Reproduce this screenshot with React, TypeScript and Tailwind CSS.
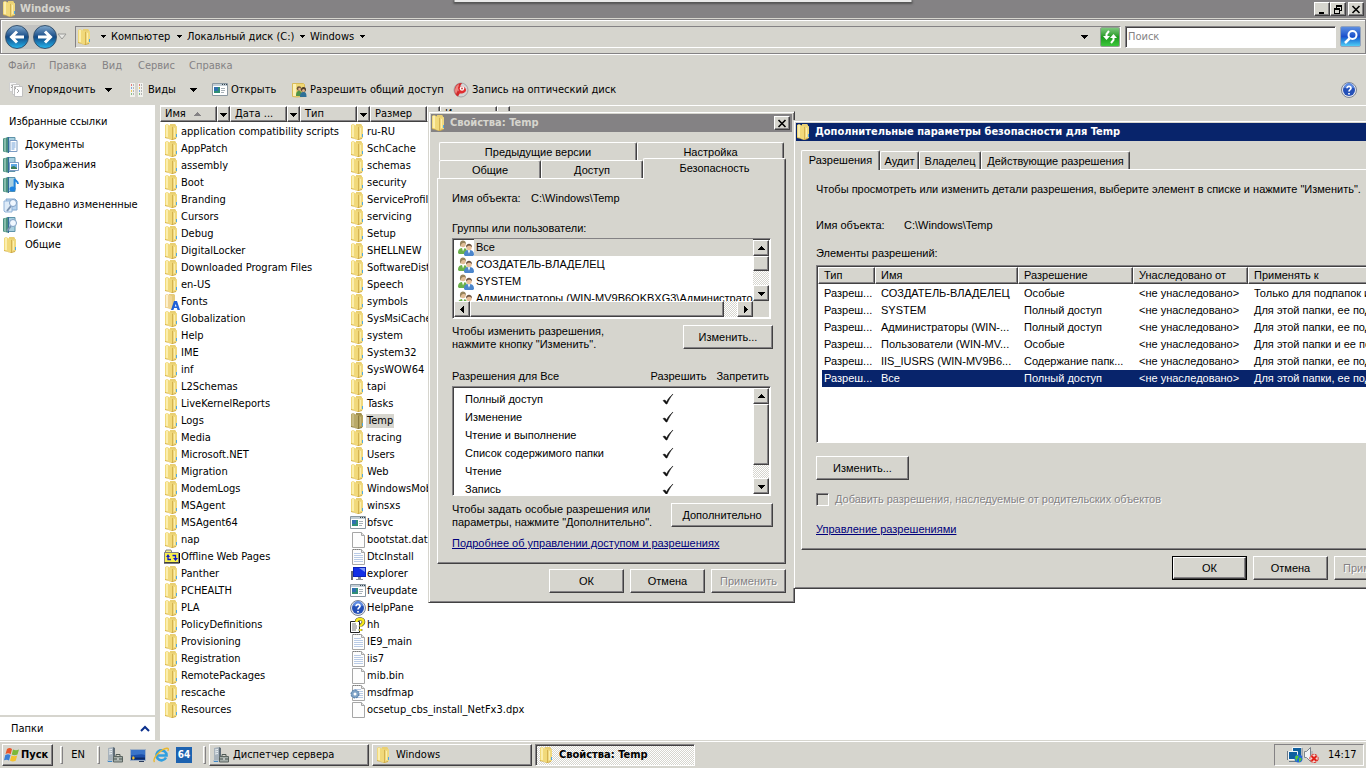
import React, { useState } from "react";

const FONT_UI = "font-['DejaVu_Sans_Condensed','DejaVu_Sans',sans-serif]";
const FONT_DIALOG = "font-['Liberation_Sans',Arial,sans-serif]";

// classic 3D edges
const RAISED =
  "border border-t-white border-l-white border-r-[#424142] border-b-[#424142] bg-[#d6d5ce] shadow-[inset_-1px_-1px_0_#848284]";
const SUNKEN =
  "border border-t-[#848284] border-l-[#848284] border-r-white border-b-white shadow-[inset_1px_1px_0_#424142]";
const TRACK =
  "bg-[repeating-conic-gradient(#ffffff_0_25%,#d6d5ce_0_50%)] bg-[length:2px_2px]";

type IconProps = { className?: string };

function FolderIcon({ className = "h-4 w-4", dark = false }: IconProps & { dark?: boolean }) {
  return (
    <svg viewBox="0 0 16 16" className={`shrink-0 ${className}`} aria-hidden="true">
      <path d="M6 0h5l1 1v13H6z" fill={dark ? "#a08f4e" : "#e9cf72"} />
      <path d="M8 3l5-1v12l-5 2z" fill={dark ? "#b3a25d" : "#f0d97f"} />
      <path d="M8 3h1v13H8z" fill={dark ? "#8b7b3f" : "#d4b250"} />
      <path d="M1 1l2-1 4 2h1v14l-5-2H1z" fill={dark ? "#b9a968" : "#f1d97a"} />
      <path d="M2 1h2v12H2z" fill={dark ? "#c9bc84" : "#fbeeae"} />
      <path d="M1 13l2 1 4 1.500 5-1.500v1l-4 1-5-1.500-2-.5z" fill={dark ? "#85763a" : "#cfaa45"} />
      <path d="M10 4h1v9h-1z" fill={dark ? "#c5b675" : "#fbeeae"} />
      <path d="M12 10h1v3h-1z" fill="#4fa8e4" />
    </svg>
  );
}

function FontsIcon() {
  return (
    <svg viewBox="0 0 16 16" className="h-4 w-4 shrink-0" aria-hidden="true">
      <path d="M5 0h5l1 1v13H5z" fill="#e6cb7c" />
      <path d="M1 1l2-1 5 2v14l-5-2H1z" fill="#f0d596" />
      <path d="M2 1h2v12H2z" fill="#fdf0cb" />
      <path d="M7 16l3-9h3l3 9h-2.500l-.6-2h-2.800l-.7 2zM10.700 12.500h1.800L11.800 10z" fill="#1f5fd8" />
    </svg>
  );
}

function OfflineIcon() {
  return (
    <svg viewBox="0 0 16 16" className="h-4 w-4 shrink-0" aria-hidden="true">
      <path d="M1 4l1-3h5l1 3z" fill="#f4ee8c" stroke="#848284" />
      <path d="M.5 3.500h14v10H.5z" fill="#f8f04c" stroke="#848284" />
      <path d="M0 14h15.500V4" fill="none" stroke="#000" />
      <path d="M2 8l2-3 2 3zM9 9h5l-2.500 3z" fill="#1018c8" />
      <path d="M4 7v3.500h3M11.500 10V6.500h-3" fill="none" stroke="#1018c8" strokeWidth="1.300" />
    </svg>
  );
}

function AppFileIcon({ className = "h-4 w-4" }: IconProps) {
  return (
    <svg viewBox="0 0 16 16" className={`shrink-0 ${className}`} aria-hidden="true">
      <path d="M.5 1.500h15v12H.5z" fill="#fff" stroke="#8a97a0" />
      <path d="M1 2h14v2H1z" fill="#c3ced6" />
      <path d="M10 2h1v1h-1zM12 2h1v1h-1zM14 2h1v1h-1z" fill="#33434d" />
      <path d="M2 5h6v6H2z" fill="#2f8f76" />
      <path d="M2 5h4v4H2z" fill="#2f6fae" />
      <path d="M9 6h4v1H9zM9 8h4v1H9zM9 10h3v1H9z" fill="#a9b2b8" />
    </svg>
  );
}

function FileIcon({ lines = false, gear = false }: { lines?: boolean; gear?: boolean }) {
  return (
    <svg viewBox="0 0 16 16" className="h-4 w-4 shrink-0" aria-hidden="true">
      <path d="M2.500.5h9l3 3v12h-12z" fill="#fdfdfd" stroke="#a6a6a6" />
      <path d="M11.500.5v3h3" fill="#e4e4e4" stroke="#a6a6a6" />
      {lines && <path d="M4 4.500h7M4 6.500h9M4 8.500h9M4 10.500h9M4 12.500h9" stroke="#b9cbe6" />}
      {lines && <path d="M3 .5h8" stroke="#7d7d7d" strokeDasharray="1 1" />}
      {gear && (
        <>
          <circle cx="5" cy="9" r="4" fill="#7fa3c6" stroke="#4d77a3" strokeDasharray="2 1" />
          <circle cx="5" cy="9" r="1.500" fill="#fff" />
        </>
      )}
    </svg>
  );
}

function ExplorerIcon() {
  return (
    <svg viewBox="0 0 16 16" className="h-4 w-4 shrink-0" aria-hidden="true">
      <path d="M3 1h13v10H3z" fill="#0b22b8" />
      <path d="M4 2h11v8H4z" fill="#1330e6" />
      <path d="M9 2h6v4z" fill="#7d98f8" />
      <path d="M1 5h2v9H1z" fill="#6b6e74" />
      <path d="M8 11h3v2h2v1H6v-1h2z" fill="#8d9096" />
    </svg>
  );
}

function HelpIcon({ className = "h-4 w-4" }: IconProps) {
  return (
    <svg viewBox="0 0 16 16" className={`shrink-0 ${className}`} aria-hidden="true">
      <circle cx="8" cy="8" r="7.500" fill="#e6e8ee" stroke="#7b8496" />
      <circle cx="8" cy="8" r="6" fill="#2450b8" />
      <path d="M3 6a5 5 0 0 1 10 0c-3-1-7-1-10 0z" fill="#5f8be0" />
      <path d="M6 6.300C6 3.600 10.200 3.800 10 6.300 9.900 7.700 8 7.700 8 9.500M8 11v1.500" fill="none" stroke="#fff" strokeWidth="1.700" />
    </svg>
  );
}

function HhIcon() {
  return (
    <svg viewBox="0 0 16 16" className="h-4 w-4 shrink-0" aria-hidden="true">
      <path d="M.5 4.500h9v11h-9z" fill="#fff" stroke="#222" />
      <path d="M2 7h4M2 9h5M2 11h5M2 13h4" stroke="#777" />
      <path d="M6.500 5c0-4 7-4 7 0 0 2.500-3 2.500-3 4.500M10.500 12v2" fill="none" stroke="#444" strokeWidth="3.600" />
      <path d="M6.500 5c0-4 7-4 7 0 0 2.500-3 2.500-3 4.500M10.500 12v2" fill="none" stroke="#f8ea1c" strokeWidth="2.400" />
    </svg>
  );
}

// sidebar link: teal book with an overlay
function LinkIcon({ kind }: { kind: string }) {
  return (
    <svg viewBox="0 0 16 16" className="h-4 w-4 shrink-0" aria-hidden="true">
      {kind === "recent" ? (
        <>
          <path d="M3 2h9l2 2v9H5z" fill="#b8d3ee" stroke="#7ea6d0" />
          <path d="M1 4h8v11H2L1 14z" fill="#deebf8" stroke="#8fb2d8" />
        </>
      ) : (
        <>
          <path d="M4 .5h8v14H4z" fill="#a8cfe0" stroke="#5d93a8" />
          <path d="M0 1.500L6 0v16l-6-1.500z" fill="#4a8f80" />
          <path d="M1 2l2-1v14l-2-1z" fill="#86bcab" />
          <path d="M5 0h1v16H5z" fill="#35699a" />
        </>
      )}
      {kind === "docs" && (
        <>
          <path d="M7 3.500h7v11H7z" fill="#fff" stroke="#7b9cc4" />
          <path d="M8.500 6h4M8.500 8h4M8.500 10h4M8.500 12h3" stroke="#6f9fd8" />
        </>
      )}
      {kind === "pics" && (
        <>
          <path d="M6.500 5.500h9v8h-9z" fill="#fff" stroke="#7b9cc4" />
          <path d="M8 7h6v5H8z" fill="#5fa8e4" />
          <path d="M8 10l3-1 3 2v1H8z" fill="#3c7e58" />
        </>
      )}
      {kind === "music" && (
        <>
          <ellipse cx="9.500" cy="12" rx="3" ry="2.500" fill="#1d83e0" />
          <path d="M11.500 12V2c1 2 3.500 2 3.500 5" fill="none" stroke="#1d83e0" strokeWidth="1.800" />
        </>
      )}
      {(kind === "search" || kind === "recent") && (
        <>
          <path d="M8 9l-4 5" stroke="#7b92b0" strokeWidth="2" />
          <circle cx="10" cy="6" r="3.500" fill="#f0f7ff" stroke="#7f9fc4" />
        </>
      )}
    </svg>
  );
}

function UsersIcon({ className = "h-4 w-4" }: IconProps) {
  return (
    <svg viewBox="0 0 16 16" className={`shrink-0 ${className}`} aria-hidden="true">
      <path d="M0 13c0-4 2-5 5-5s4 1 4 5l-2 1H1z" fill="#6bb04a" />
      <path d="M4 8l1 3.500L6.500 8z" fill="#fff" />
      <circle cx="5" cy="4.500" r="2.700" fill="#e0bd96" />
      <path d="M2 5C1-.8 8.500-.8 8 4.500 7 2.500 4 2.500 3 5v2z" fill="#97845c" />
      <path d="M6 15c0-4 2-5 5-5s5 1 5 5l-1 1H7z" fill="#4b86cc" />
      <circle cx="11" cy="7.500" r="2.700" fill="#e8c09a" />
      <path d="M8 7.500c-.5-5 6.500-5 6 0-1-2-4-2.500-6 0z" fill="#6d5440" />
      <path d="M9.700 10.200l1.300 3.500 1.300-3.500z" fill="#fff" />
    </svg>
  );
}

function OrganizeIcon() {
  return (
    <svg viewBox="0 0 16 16" className="h-4 w-4 shrink-0" aria-hidden="true">
      <path d="M.5.5h7v9h-7z" fill="#f6f6f6" stroke="#d0d0d0" />
      <path d="M3.500 2.500h7v10h-7z" fill="#fbfbfb" stroke="#c6c6c6" />
      <path d="M5.500 4.500h8v10h-8z" fill="#fff" stroke="#c0c0c0" />
      <path d="M2 3l2 1-2 2M5 5l2 1-2 2M8 7l2 2-2 2" fill="none" stroke="#a8a8a8" />
    </svg>
  );
}

function ViewsIcon() {
  return (
    <svg viewBox="0 0 16 16" className="h-4 w-4 shrink-0" aria-hidden="true">
      <path d="M0 1h5v14H0zM8 1h5v14H8z" fill="#f2f2ee" />
      <path d="M1 2h1v2H1zM9 2h1v2H9z" fill="#e07a7a" />
      <path d="M1 5h1v2H1zM9 8h1v2H9z" fill="#7fa5de" />
      <path d="M1 8h1v2H1zM9 5h1v2H9z" fill="#ecc85c" />
      <path d="M1 11h1v2H1zM9 11h1v2H9z" fill="#84c084" />
      <path d="M3.500 2v12M11.500 2v12" stroke="#b4b4b4" strokeDasharray="2 1" />
    </svg>
  );
}

function ShareIcon() {
  return (
    <svg viewBox="0 0 16 16" className="h-4 w-4 shrink-0" aria-hidden="true">
      <path d="M.5 1.500h11l1 1v12l-8 .5-4-.5z" fill="#f0d774" stroke="#d8bb58" />
      <path d="M1 2h3v12H1z" fill="#fbf0b4" />
      <path d="M4 14c0-4 1-5 3-5s3 1 3 5z" fill="#4f9448" />
      <circle cx="7" cy="6.500" r="2.300" fill="#6b543c" />
      <circle cx="7.500" cy="7" r="1.300" fill="#dfb08a" />
      <path d="M8 15c0-4 1.500-5 3.500-5s3 1 3 5z" fill="#2f7098" />
      <circle cx="11.500" cy="7.500" r="2.500" fill="#4a3a2b" />
      <circle cx="11.500" cy="8.500" r="1.500" fill="#dfb08a" />
    </svg>
  );
}

function BurnIcon() {
  return (
    <svg viewBox="0 0 16 16" className="h-4 w-4 shrink-0" aria-hidden="true">
      <circle cx="8" cy="8" r="7" fill="#d4d4d4" stroke="#a4a4a4" />
      <path d="M9 1C1 0-1 12 5 14.500L7 11 5 8z" fill="#cf2a2c" />
      <path d="M6 2C2 4 1 9 3 12l2-4z" fill="#ee8680" />
      <path d="M5 5c3-2 8 0 8 3 0 3-5 4.500-7 3z" fill="#e02d2f" />
      <circle cx="9" cy="6.500" r="2.200" fill="#fff" />
      <circle cx="9" cy="6.500" r=".9" fill="#b8443c" />
    </svg>
  );
}

function ServerIcon() {
  return (
    <svg viewBox="0 0 16 16" className="h-4 w-4 shrink-0" aria-hidden="true">
      <path d="M1 1l5-1v14l-5 1z" fill="#a7b2bb" />
      <path d="M6 0l2 1v13H6z" fill="#5e6b76" />
      <path d="M2 3l3-.5M2 5l3-.5M2 7l3-.5" stroke="#eef2f5" />
      <path d="M0 13h6v2H0z" fill="#b4c2cc" />
      <path d="M1 14h4v1H1z" fill="#3f88c8" />
      <path d="M6.500 9.500h9v5.500h-9z" fill="#a3aca8" stroke="#5c6662" />
      <path d="M9 9V7.500h4V9M6 12h10" fill="none" stroke="#4f5a56" />
      <path d="M10.500 11h1v2h-1z" fill="#fff" />
    </svg>
  );
}

function DesktopIcon() {
  return (
    <svg viewBox="0 0 16 16" className="h-4 w-4 shrink-0" aria-hidden="true">
      <path d="M.5 2.500h15v11H.5z" fill="#1c4fa8" stroke="#9fb0c6" />
      <path d="M1 3h14v5C10 6 5 9 1 8z" fill="#3a74c8" />
      <path d="M1 11.500h14" stroke="#0c2b66" strokeWidth="2" />
      <path d="M3 9l2 2-2 2-1-2z" fill="#f0c030" />
      <path d="M9 14h5v1H9z" fill="#2a3c5c" />
    </svg>
  );
}

function IeIcon() {
  return (
    <svg viewBox="0 0 16 16" className="h-4 w-4 shrink-0" aria-hidden="true">
      <path d="M13 10.500A5 5 0 1 1 13.500 8.500H4" fill="none" stroke="#2f9fe0" strokeWidth="2.700" />
      <path d="M1.500 15C-1 12 8 1.500 14 1.200c1.500 0 1.700 1 .8 2.800" fill="none" stroke="#eab82c" strokeWidth="1.400" />
    </svg>
  );
}

function WindowsFlag() {
  return (
    <svg viewBox="0 0 16 16" className="h-4 w-4 shrink-0" aria-hidden="true">
      <path d="M3 2c2-1.500 3.500-1 5 0L6.700 7.300C5 6 3.500 6 1.500 7z" fill="#e8562a" />
      <path d="M9 2.500c2 1 4 1 6 0l-1.500 5c-2 1-4 1-5.700 0z" fill="#7cb83a" />
      <path d="M1.300 8c2-1 3.500-1 5.200 0L5 13.500c-1.500-1-3-1-5-.2z" fill="#3b7fd4" />
      <path d="M7.500 8.500c2 1 3.700 1 5.700 0l-1.500 5.300c-2 1-3.700 1-5.700 0z" fill="#f4c22e" />
    </svg>
  );
}

function NetworkIcon() {
  return (
    <svg viewBox="0 0 16 16" className="h-4 w-4 shrink-0" aria-hidden="true">
      <path d="M5.500.5h9v9h-9z" fill="#0f5f9e" stroke="#f4f6f8" />
      <path d="M15 1v9" stroke="#6b7a88" />
      <path d="M1.500 4.500h9v8h-9z" fill="#0f5f9e" stroke="#f4f6f8" />
      <path d="M.5 4v9M2 14.500h7" stroke="#6b7a88" />
      <circle cx="11.500" cy="11.500" r="4" fill="#2166d8" />
      <path d="M8 10c2-3 5-1 3 1s-1 4-2 3zM12 11c4-1 3 3 0 4z" fill="#55c83c" />
    </svg>
  );
}

function MutedIcon() {
  return (
    <svg viewBox="0 0 16 16" className="h-4 w-4 shrink-0" aria-hidden="true">
      <path d="M1.500 4.500h2l4-4v14l-4-4h-2z" fill="#f2f4f6" stroke="#7c858d" />
      <path d="M9 4v3" stroke="#9aa2aa" />
      <circle cx="11" cy="11.500" r="4.200" fill="#f4d6d2" stroke="#d8322a" strokeDasharray="3 1" />
      <path d="M8.500 9l5 5M13.500 9l-5 5" stroke="#e02018" strokeWidth="2" />
    </svg>
  );
}

function Arrow({ dir = "down", className = "" }: { dir?: "up" | "down" | "left" | "right"; className?: string }) {
  const paths = {
    down: "M0 2h7L3.500 6z",
    up: "M0 5h7L3.500 1z",
    left: "M5 0v7L1 3.500z",
    right: "M2 0v7l4-3.500z",
  };
  return (
    <svg viewBox="0 0 7 7" className={`h-[7px] w-[7px] shrink-0 ${className}`} aria-hidden="true">
      <path d={paths[dir]} fill="currentColor" shapeRendering="crispEdges" />
    </svg>
  );
}

// narrow arrow of the breadcrumb separators
function CrumbArrow() {
  return (
    <svg viewBox="0 0 7 7" className="h-[7px] w-[7px] shrink-0" aria-hidden="true">
      <path d="M1 2h5L3.500 5z" shapeRendering="crispEdges" />
    </svg>
  );
}

function WinButton({ label, children }: { label: string; children: React.ReactNode }) {
  return (
    <button type="button" aria-label={label} className={`flex h-[14px] w-4 items-center justify-center ${RAISED}`}>
      <svg viewBox="0 0 10 9" className="h-[9px] w-[10px]" shapeRendering="crispEdges" aria-hidden="true">
        {children}
      </svg>
    </button>
  );
}

const closeGlyph = <path d="M1.500 1l7 7M8.500 1l-7 7" stroke="#000" strokeWidth="1.600" shapeRendering="auto" />;

function PushButton({ children, className = "w-[75px]", disabled = false, isDefault = false }: {
  children: React.ReactNode;
  className?: string;
  disabled?: boolean;
  isDefault?: boolean;
}) {
  const button = (
    <button
      type="button"
      disabled={disabled}
      className={`shrink-0 ${RAISED} ${isDefault ? "h-[22px] w-[73px]" : `h-6 ${className}`} ${
        disabled ? "text-[#848284] [text-shadow:1px_1px_0_#fff]" : ""
      }`}
    >
      {children}
    </button>
  );
  return isDefault ? <span className="flex border border-black">{button}</span> : button;
}

function ScrollButton({ dir }: { dir: "up" | "down" | "left" | "right" }) {
  return (
    <button type="button" aria-label={dir} className={`flex h-4 w-4 shrink-0 items-center justify-center ${RAISED}`}>
      <Arrow dir={dir} />
    </button>
  );
}

function Tab({ children, className = "", selected = false, onClick }: {
  children: React.ReactNode;
  className?: string;
  selected?: boolean;
  onClick?: () => void;
}) {
  return (
    <button
      type="button"
      role="tab"
      aria-selected={selected}
      onClick={onClick}
      className={`rounded-t-[2px] border-t border-r border-l border-t-white border-r-[#424142] border-l-white bg-[#d6d5ce] shadow-[inset_-1px_0_0_#848284] ${
        selected ? "relative z-10 -mb-px pb-0.5" : ""
      } ${className}`}
    >
      {children}
    </button>
  );
}

const folders1 = [
  "application compatibility scripts", "AppPatch", "assembly", "Boot", "Branding", "Cursors", "Debug",
  "DigitalLocker", "Downloaded Program Files", "en-US", "Fonts", "Globalization", "Help", "IME", "inf",
  "L2Schemas", "LiveKernelReports", "Logs", "Media", "Microsoft.NET", "Migration", "ModemLogs", "MSAgent",
  "MSAgent64", "nap", "Offline Web Pages", "Panther", "PCHEALTH", "PLA", "PolicyDefinitions",
  "Provisioning", "Registration", "RemotePackages", "rescache", "Resources",
];

const folders2 = [
  "ru-RU", "SchCache", "schemas", "security", "ServiceProfiles", "servicing", "Setup", "SHELLNEW",
  "SoftwareDistribution", "Speech", "symbols", "SysMsiCache", "system", "System32", "SysWOW64", "tapi",
  "Tasks", "Temp", "tracing", "Users", "Web", "WindowsMobile", "winsxs", "bfsvc", "bootstat.dat",
  "DtcInstall", "explorer", "fveupdate", "HelpPane", "hh", "IE9_main", "iis7", "mib.bin", "msdfmap",
  "ocsetup_cbs_install_NetFx3.dpx",
];

const specialIcons: Record<string, React.ReactNode> = {
  Fonts: <FontsIcon />,
  "Offline Web Pages": <OfflineIcon />,
  Temp: <FolderIcon dark />,
  bfsvc: <AppFileIcon />,
  fveupdate: <AppFileIcon />,
  "bootstat.dat": <FileIcon />,
  "mib.bin": <FileIcon />,
  "ocsetup_cbs_install_NetFx3.dpx": <FileIcon />,
  DtcInstall: <FileIcon lines />,
  IE9_main: <FileIcon lines />,
  iis7: <FileIcon lines />,
  msdfmap: <FileIcon lines gear />,
  explorer: <ExplorerIcon />,
  HelpPane: <HelpIcon />,
  hh: <HhIcon />,
};

const favourites = [
  { name: "Документы", kind: "docs" },
  { name: "Изображения", kind: "pics" },
  { name: "Музыка", kind: "music" },
  { name: "Недавно измененные", kind: "recent" },
  { name: "Поиски", kind: "search" },
  { name: "Общие", kind: "public" },
];

const permissions = ["Полный доступ", "Изменение", "Чтение и выполнение", "Список содержимого папки", "Чтение", "Запись"];

const groups = ["Все", "СОЗДАТЕЛЬ-ВЛАДЕЛЕЦ", "SYSTEM", "Администраторы (WIN-MV9B6QKBXG3\\Администраторы)"];

const entries = [
  ["СОЗДАТЕЛЬ-ВЛАДЕЛЕЦ", "Особые", "Только для подпапок и файлов"],
  ["SYSTEM", "Полный доступ", "Для этой папки, ее подпапок"],
  ["Администраторы (WIN-...", "Полный доступ", "Для этой папки, ее подпапок"],
  ["Пользователи (WIN-MV...", "Особые", "Для этой папки и ее подпапок"],
  ["IIS_IUSRS (WIN-MV9B6...", "Содержание папк...", "Для этой папки, ее подпапок"],
  ["Все", "Полный доступ", "Для этой папки, ее подпапок"],
];

function FileColumn({ names }: { names: string[] }) {
  return (
    <ul className="w-[186px] shrink-0">
      {names.map((name) => (
        <li key={name} className="flex h-[17px] items-center whitespace-nowrap">
          {specialIcons[name] ?? <FolderIcon />}
          <span className={name === "Temp" ? "bg-[#d6d5ce] px-px" : "px-px"}>{name}</span>
        </li>
      ))}
    </ul>
  );
}

function ExplorerHeader() {
  return (
    <>
      <div className="flex h-[18px] shrink-0 items-center bg-[#848284] pr-0.5 pl-[2px] text-[#d6d5ce]">
        <FolderIcon />
        <h1 className="flex-1 pl-0.5 font-bold">Windows</h1>
        <WinButton label="Свернуть">
          <path d="M2 7h5v2H2z" />
        </WinButton>
        <WinButton label="Восстановить">
          <path d="M3 0h6v6H7V5h1V2H4v1H3zM1 3h6v6H1zm1 2v3h4V5z" fillRule="evenodd" />
        </WinButton>
        <span className="ml-0.5 flex">
          <WinButton label="Закрыть">{closeGlyph}</WinButton>
        </span>
      </div>

      <nav className="mt-px flex h-[35px] shrink-0 items-center border border-[#848284] pr-1 pl-1 shadow-[inset_1px_1px_0_#fff,0_1px_0_#fff]">
        <div className="flex items-center gap-1 rounded-full bg-[#c3c3c1]">
          <button type="button" aria-label="Назад" className="flex h-6 w-6 items-center justify-center rounded-full border border-[#36536f] bg-gradient-to-b from-[#7fa8cc] via-[#134a86] to-[#26b4ec]">
            <svg viewBox="0 0 16 16" className="h-4 w-4"><path d="M15 8H3M8 2.500L2.500 8 8 13.500" fill="none" stroke="#fff" strokeWidth="3" /></svg>
          </button>
          <button type="button" aria-label="Вперед" className="flex h-6 w-6 items-center justify-center rounded-full border border-[#36536f] bg-gradient-to-b from-[#7fa8cc] via-[#134a86] to-[#26b4ec]">
            <svg viewBox="0 0 16 16" className="h-4 w-4"><path d="M1 8h12M8 2.500L13.500 8 8 13.500" fill="none" stroke="#fff" strokeWidth="3" /></svg>
          </button>
        </div>
        <svg viewBox="0 0 10 7" className="mr-2 h-[7px] w-[10px]" aria-hidden="true">
          <path d="M1 1h8L5 6z" fill="#e8e8e4" stroke="#9a9a98" />
        </svg>
        <div className="flex h-[22px] flex-1 items-center border border-t-[#848284] border-l-[#848284] border-r-white border-b-white pl-px">
          <FolderIcon />
          <span className="flex flex-1 items-center gap-1 pl-[7px] whitespace-nowrap">
            <CrumbArrow />
            <button type="button" className="w-[61px] text-left">Компьютер</button>
            <CrumbArrow />
            <button type="button" className="w-[108px] text-left">Локальный диск (C:)</button>
            <CrumbArrow />
            <button type="button" className="w-[45px] text-left">Windows</button>
            <CrumbArrow />
          </span>
          <Arrow className="mr-3" />
          <button type="button" aria-label="Обновить" className="flex h-5 w-5 items-center justify-center rounded-[2px] border border-[#8fa08f] bg-gradient-to-b from-[#7cc87c] via-[#1c9a1c] to-[#3cc83c]">
            <svg viewBox="0 0 16 16" className="h-4 w-4"><path d="M7 2L4.500 5v4M9 14l2.500-3V7" fill="none" stroke="#fff" strokeWidth="2" /><path d="M1 7h7l-3.500 4zM8 9h7l-3.500-4z" fill="#fff" /></svg>
          </button>
        </div>
        <input type="text" aria-label="Поиск" placeholder="Поиск" className={`ml-1 h-[22px] w-[211px] bg-white px-0.5 placeholder:text-[#848284] ${SUNKEN}`} />
        <button type="button" aria-label="Найти" className="ml-1 flex h-[21px] w-[21px] items-center justify-center rounded-[2px] border border-[#93a3bc] bg-gradient-to-b from-[#5c8ee0] via-[#1c50cc] to-[#52cdf4]">
          <svg viewBox="0 0 16 16" className="h-4 w-4"><circle cx="9.500" cy="6" r="4" fill="none" stroke="#fff" strokeWidth="2" /><path d="M6.500 9.500L2 14" stroke="#fff" strokeWidth="2.500" /></svg>
        </button>
      </nav>

      <div className="mt-px flex h-[21px] shrink-0 items-center pl-2 text-[#848284]">
        <button type="button" className="w-[41px] text-left">Файл</button>
        <button type="button" className="w-[53px] text-left">Правка</button>
        <button type="button" className="w-9 text-left">Вид</button>
        <button type="button" className="w-[51px] text-left">Сервис</button>
        <button type="button">Справка</button>
      </div>

      <div className="flex h-[29px] shrink-0 items-center pr-[9px] pb-0.5 pl-[9px] whitespace-nowrap">
        <button type="button" className="flex w-[121px] items-center gap-[3px]">
          <OrganizeIcon />
          <span className="w-[74px] text-left">Упорядочить</span>
          <Arrow />
        </button>
        <button type="button" className="flex w-[82px] items-center gap-0.5">
          <ViewsIcon />
          <span className="w-10 text-left">Виды</span>
          <Arrow />
        </button>
        <button type="button" className="flex w-20 items-center gap-[3px]">
          <AppFileIcon />
          Открыть
        </button>
        <button type="button" className="flex w-[161px] items-center gap-0.5">
          <ShareIcon />
          Разрешить общий доступ
        </button>
        <button type="button" className="flex flex-1 items-center gap-[3px]">
          <BurnIcon />
          Запись на оптический диск
        </button>
        <button type="button" aria-label="Справка">
          <HelpIcon />
        </button>
      </div>
    </>
  );
}

function ColumnHeaders() {
  return (
    <div className="flex h-[17px] shrink-0 border-t border-white bg-[#d6d5ce]">
      {["Имя", "Дата ...", "Тип", "Размер", "И ..."].map((name, i) => (
        <div key={name} className="flex">
          <button type="button" className={`flex w-[57px] items-center gap-2 pl-1 ${RAISED}`}>
            {name}
            {i === 0 && <Arrow dir="up" className="text-[#848284]" />}
          </button>
          <button type="button" aria-label={`Фильтр: ${name}`} className={`flex w-[13px] items-center justify-center ${RAISED}`}>
            <Arrow className="h-[5px] w-[5px]" />
          </button>
        </div>
      ))}
    </div>
  );
}

function PropertiesDialog() {
  const [tab, setTab] = useState("Безопасность");
  return (
    <section className={`absolute top-[111px] left-[428px] w-[367px] border border-t-[#d6d5ce] border-l-[#d6d5ce] border-r-[#424142] border-b-[#424142] bg-[#d6d5ce] p-0.5 shadow-[inset_1px_1px_0_#fff,inset_-1px_-1px_0_#848284] ${FONT_DIALOG}`}>
      <header className={`flex h-[18px] items-center bg-[#848284] pr-0.5 text-[#d6d5ce] ${FONT_UI}`}>
        <FolderIcon />
        <h2 className="flex-1 pl-[3px] font-bold">Свойства: Temp</h2>
        <WinButton label="Закрыть">{closeGlyph}</WinButton>
      </header>

      <div className="mx-1.5 mt-2.5" role="tablist">
        <div className="flex px-0.5">
          <Tab className="h-[18px] w-[198px]" onClick={() => setTab("Предыдущие версии")}>Предыдущие версии</Tab>
          <Tab className="h-[18px] flex-1" onClick={() => setTab("Настройка")}>Настройка</Tab>
        </div>
        <div className="flex items-end pl-0.5">
          <Tab className="h-[18px] w-[102px]" onClick={() => setTab("Общие")}>Общие</Tab>
          <Tab className="h-[18px] w-[102px]" onClick={() => setTab("Доступ")}>Доступ</Tab>
          <Tab className="-mt-0.5 h-[21px] flex-1" selected={tab === "Безопасность"}>Безопасность</Tab>
        </div>
      </div>

      <div className={`mx-1.5 px-[14px] pt-[13px] pb-[13px] leading-[13px] ${RAISED}`}>
        <p className="flex">
          <span className="w-[79px]">Имя объекта:</span>
          <span>C:\Windows\Temp</span>
        </p>
        <p className="mt-[17px]">Группы или пользователи:</p>
        <div className={`mt-[3px] flex h-[81px] flex-col bg-white p-px ${SUNKEN}`}>
          <div className="flex h-[61px]">
            <ul className="-mt-px flex-1 overflow-hidden">
              {groups.map((name, i) => (
                <li key={name} className="flex h-[17px] items-center pl-1 whitespace-nowrap">
                  <UsersIcon />
                  <span className={`flex-1 pl-0.5 leading-[17px] ${i === 0 ? "bg-[#d6d5ce]" : ""}`}>{name}</span>
                </li>
              ))}
            </ul>
            <div className={`flex w-4 flex-col ${TRACK}`}>
              <ScrollButton dir="up" />
              <div className={`h-[15px] ${RAISED}`} />
              <div className="flex-1" />
              <ScrollButton dir="down" />
            </div>
          </div>
          <div className="flex h-4 bg-[#d6d5ce] pr-4">
            <div className={`flex flex-1 ${TRACK}`}>
              <ScrollButton dir="left" />
              <div className={`w-[254px] ${RAISED}`} />
              <div className="flex-1" />
              <ScrollButton dir="right" />
            </div>
          </div>
        </div>
        <div className="-mr-0.5 mt-1.5 flex justify-between">
          <p>
            Чтобы изменить разрешения,
            <br />
            нажмите кнопку "Изменить".
          </p>
          <PushButton className="w-[90px]">Изменить...</PushButton>
        </div>
        <div className="mt-[19px] flex pr-0.5">
          <span className="flex-1">Разрешения для Все</span>
          <span className="w-[66px]">Разрешить</span>
          <span>Запретить</span>
        </div>
        <div className={`mt-[3px] flex h-[110px] overflow-hidden bg-white p-px ${SUNKEN}`}>
          <div className="flex-1 overflow-hidden pt-0.5">
            <table className="w-full border-separate border-spacing-0">
              <tbody>
                {permissions.map((name) => (
                  <tr key={name} className="h-[18px]">
                    <td className="p-0 pl-[11px]">{name}</td>
                    <td className="w-[91px] p-0">
                      <svg viewBox="0 0 12 12" className="h-3 w-3" role="img" aria-label="Разрешено">
                        <path d="M1 7.500l2-.5L4.500 9C6 6 8 3.500 11 1 8.500 4 6.500 7.500 5 11H4z" fill="#111" stroke="#111" strokeWidth=".5" />
                      </svg>
                    </td>
                  </tr>
                ))}
              </tbody>
            </table>
          </div>
          <div className={`flex w-4 flex-col ${TRACK}`}>
            <ScrollButton dir="up" />
            <div className={`h-[61px] ${RAISED}`} />
            <div className="flex-1" />
            <ScrollButton dir="down" />
          </div>
        </div>
        <div className="-mr-0.5 mt-[7px] flex justify-between">
          <p>
            Чтобы задать особые разрешения или
            <br />
            параметры, нажмите "Дополнительно".
          </p>
          <PushButton className="w-[102px]">Дополнительно</PushButton>
        </div>
        <a href="#help" className="mt-2 block text-[#00007b] underline">
          Подробнее об управлении доступом и разрешениях
        </a>
      </div>

      <div className="mx-1.5 mt-[5px] mb-[7px] flex justify-end gap-1.5">
        <PushButton>ОК</PushButton>
        <PushButton>Отмена</PushButton>
        <PushButton disabled>Применить</PushButton>
      </div>
    </section>
  );
}

function SecurityDialog() {
  const th = `h-[17px] p-0 pl-[5px] text-left font-normal ${RAISED}`;
  return (
    <section className={`absolute top-[120px] left-[793px] w-[625px] border border-t-[#d6d5ce] border-l-[#d6d5ce] border-r-[#424142] border-b-[#424142] bg-[#d6d5ce] p-0.5 shadow-[inset_1px_1px_0_#fff,inset_-1px_-1px_0_#848284] ${FONT_DIALOG}`}>
      <header className={`flex h-[18px] items-center bg-[#08246b] text-white ${FONT_UI}`}>
        <FolderIcon />
        <h2 className="pl-[3px] font-bold">Дополнительные параметры безопасности для Temp</h2>
      </header>

      <div className="mx-[5px] mt-[9px] flex items-end" role="tablist">
        <Tab className="h-5 w-[79px]" selected>Разрешения</Tab>
        <Tab className="h-[18px] w-[39px]">Аудит</Tab>
        <Tab className="h-[18px] w-[62px]">Владелец</Tab>
        <Tab className="h-[18px] w-[149px]">Действующие разрешения</Tab>
      </div>

      <div className={`mr-1.5 ml-[5px] px-[14px] pt-[13px] pb-[13px] leading-[13px] ${RAISED}`}>
        <p className="whitespace-nowrap">
          Чтобы просмотреть или изменить детали разрешения, выберите элемент в списке и нажмите "Изменить".
        </p>
        <p className="mt-[23px] flex">
          <span className="w-[88px]">Имя объекта:</span>
          <span>C:\Windows\Temp</span>
        </p>
        <p className="mt-[15px]">Элементы разрешений:</p>
        <div className={`mt-[5px] h-[178px] overflow-hidden bg-white p-px ${SUNKEN}`}>
          <table className="w-full table-fixed border-separate border-spacing-0 whitespace-nowrap">
            <thead>
              <tr>
                <th className={`w-[57px] ${th}`}>Тип</th>
                <th className={`w-[143px] ${th}`}>Имя</th>
                <th className={`w-[115px] ${th}`}>Разрешение</th>
                <th className={`w-[115px] ${th}`}>Унаследовано от</th>
                <th className={th}>Применять к</th>
              </tr>
            </thead>
            <tbody className="before:block before:h-px before:content-['']">
              {entries.map(([name, access, scope]) => (
                <tr key={name} className={`h-[17px] ${name === "Все" ? "bg-[#08246b] text-white" : ""}`}>
                  <td className="border-l-4 border-white p-0 pl-0.5">Разреш...</td>
                  <td className="p-0 pl-1.5">{name}</td>
                  <td className="p-0 pl-1.5">{access}</td>
                  <td className="p-0 pl-1.5">&lt;не унаследовано&gt;</td>
                  <td className="p-0 pl-1.5">{scope}</td>
                </tr>
              ))}
            </tbody>
          </table>
        </div>
        <PushButton className="mt-[13px] block w-[93px]">Изменить...</PushButton>
        <label className="mt-[13px] flex items-center gap-1.5 text-[#848284] [text-shadow:1px_1px_0_#fff]">
          <input type="checkbox" disabled className={`h-[13px] w-[13px] appearance-none ${SUNKEN}`} />
          Добавить разрешения, наследуемые от родительских объектов
        </label>
        <a href="#manage" className="mt-[17px] block text-[#00007b] underline">
          Управление разрешениями
        </a>
      </div>

      <div className="mr-1.5 mt-1.5 mb-1.5 flex justify-end gap-1.5">
        <PushButton isDefault>ОК</PushButton>
        <PushButton>Отмена</PushButton>
        <PushButton disabled>Применить</PushButton>
      </div>
    </section>
  );
}

function Grip() {
  return <span className="h-[18px] w-[3px] shrink-0 border border-t-white border-l-white border-r-[#848284] border-b-[#848284]" />;
}

function Taskbar() {
  const task = "flex h-[22px] w-40 items-center gap-1 pl-[3px] text-left";
  return (
    <footer className="flex h-7 shrink-0 items-center border-t border-[#d6d5ce] bg-[#d6d5ce] pr-0.5 pl-0.5 shadow-[inset_0_1px_0_#fff]">
      <button type="button" className={`flex h-[22px] w-[51px] items-center gap-px pl-px font-bold ${RAISED}`}>
        <WindowsFlag />
        Пуск
      </button>
      <span className="w-[7px]" />
      <Grip />
      <span className="w-[34px] pr-1 text-center">EN</span>
      <Grip />
      <div className="ml-[7px] flex w-24 items-center gap-[7px]">
        <ServerIcon />
        <DesktopIcon />
        <IeIcon />
        <span className="flex h-4 w-4 items-center justify-center bg-[#1c62b0] text-[10px] font-bold text-white">64</span>
      </div>
      <div className="flex flex-1 items-center gap-[3px]">
        <Grip />
        <button type="button" className={`${task} ${RAISED}`}>
          <ServerIcon />
          Диспетчер сервера
        </button>
        <button type="button" className={`${task} ${RAISED}`}>
          <FolderIcon />
          Windows
        </button>
        <button type="button" className={`${task} font-bold ${TRACK} ${SUNKEN}`}>
          <FolderIcon />
          Свойства: Temp
        </button>
      </div>
      <div className="flex h-[22px] w-[90px] items-center border border-t-[#848284] border-l-[#848284] border-r-white border-b-white pl-3">
        <NetworkIcon />
        <MutedIcon />
        <time className="pl-[9px]">14:17</time>
      </div>
    </footer>
  );
}

export default function App() {
  return (
    <div className={`relative flex h-screen flex-col overflow-hidden bg-[#d6d5ce] text-[11px] leading-[14px] text-black ${FONT_UI}`}>
      <ExplorerHeader />

      <main className="flex min-h-0 flex-1 gap-[5px]">
        <aside className="flex w-[155px] shrink-0 flex-col bg-white">
          <h2 className="pt-2.5 pl-[9px]">Избранные ссылки</h2>
          <ul className="mt-1.5 flex-1">
            {favourites.map(({ name, kind }) => (
              <li key={name}>
                <a href="#folder" className="flex h-5 items-center gap-1.5 pl-[3px] whitespace-nowrap">
                  {kind === "public" ? <FolderIcon /> : <LinkIcon kind={kind} />}
                  {name}
                </a>
              </li>
            ))}
          </ul>
          <button type="button" className="flex h-[25px] items-center justify-between border-t-2 border-[#d6d5ce] pr-[5px] pl-[11px]">
            Папки
            <svg viewBox="0 0 10 7" className="h-[7px] w-[10px]" aria-hidden="true">
              <path d="M1 6l4-4 4 4" fill="none" stroke="#0a2f8c" strokeWidth="2" />
            </svg>
          </button>
        </aside>
        <div className="flex min-w-0 flex-1 flex-col bg-white">
          <ColumnHeaders />
          <div className="flex overflow-hidden pt-px pl-1">
            <FileColumn names={folders1} />
            <FileColumn names={folders2} />
          </div>
        </div>
      </main>

      <Taskbar />

      <PropertiesDialog />
      <SecurityDialog />

      {/* collapsed remote-desktop connection bar */}
      <div className="absolute top-0 left-1/2 h-0.5 w-[457px] -translate-x-1/2 bg-[#e9e9e9] shadow-[0_1px_2px_1px_#555]" />
    </div>
  );
}
